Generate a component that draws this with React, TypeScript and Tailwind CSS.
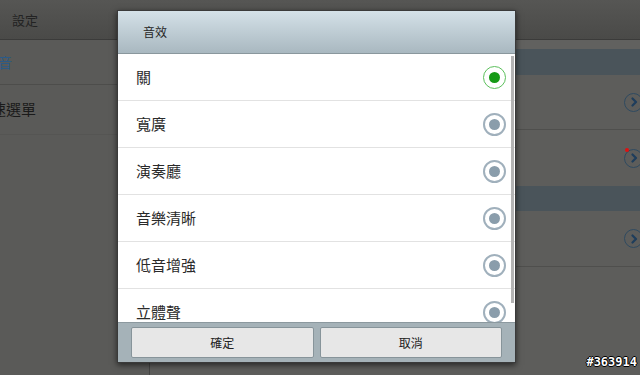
import React from "react";

const items = ["關", "寬廣", "演奏廳", "音樂清晰", "低音增強", "立體聲"];

function Radio({ on }: { on: boolean }) {
  return on ? (
    <div className="w-[23px] h-[23px] rounded-full border-[1.5px] border-[#5cc05c] flex items-center justify-center">
      <div className="w-[11px] h-[11px] rounded-full bg-[#169a16]" />
    </div>
  ) : (
    <div className="w-[23px] h-[23px] rounded-full border-2 border-[#a0b0bc] flex items-center justify-center">
      <div className="w-[11px] h-[11px] rounded-full bg-[#8a9dab]" />
    </div>
  );
}

function Chevron({ dot }: { dot?: boolean }) {
  return (
    <div className="relative w-[19px] h-[19px] mr-[-3px] rounded-full border-[1.5px] border-[#2f4a60] flex items-center justify-center">
      <svg width="10" height="10" viewBox="0 0 10 10">
        <path d="M3.5 1.5 L7 5 L3.5 8.5" fill="none" stroke="#1e3d5c" strokeWidth="2.2" strokeLinecap="round" strokeLinejoin="round" />
      </svg>
      {dot && <div className="absolute left-[0px] top-[-2px] w-[4px] h-[4px] rounded-full bg-[#e01010]" />}
    </div>
  );
}

export default function App() {
  return (
    <div
      className="relative w-[640px] h-[375px] overflow-hidden bg-[#5b5b59] flex flex-col"
      style={{ fontFamily: '"Noto Sans CJK TC", "Noto Sans", sans-serif' }}
    >
      <div className="h-[40px] shrink-0 bg-gradient-to-b from-[#565654] to-[#4a4a48] border-b border-[#3b3b3a] flex items-center pl-[12px] text-[13px] text-[#232323]">
        設定
      </div>
      <div className="flex flex-1">
        <div className="w-[150px] shrink-0 border-r border-[#444443] bg-[#5a5a58] flex flex-col">
          <div className="h-[45px] border-b border-[#4d4d4b] flex items-center overflow-hidden">
            <span className="text-[14px] text-[#2c5a86] ml-[-16px] whitespace-nowrap">聲音</span>
          </div>
          <div className="h-[50px] border-b border-[#555553] flex items-center overflow-hidden">
            <span className="text-[15px] text-[#1a1a1a] ml-[-9px] whitespace-nowrap">速選單</span>
          </div>
        </div>
        <div className="flex-1 flex flex-col">
          <div className="h-[9px] bg-[#61615f]" />
          <div className="h-[26px] bg-[#4a545a]" />
          <div className="h-[55px] bg-[#5d5d5b] border-b border-[#4f4f4d] flex items-center justify-end">
            <Chevron />
          </div>
          <div className="h-[56px] bg-[#5d5d5b] flex items-center justify-end">
            <Chevron dot />
          </div>
          <div className="h-[25px] bg-[#4a545a]" />
          <div className="h-[56px] bg-[#5d5d5b] border-b border-[#4f4f4d] flex items-center justify-end">
            <Chevron />
          </div>
          <div className="flex-1 bg-[#5d5d5b]" />
        </div>
      </div>

      <div className="absolute left-[117px] top-[10px] w-[399px] h-[353px] border border-[#3a3a3a] shadow-[0_2px_6px_rgba(0,0,0,0.6)] flex flex-col bg-white">
        <div className="h-[43px] shrink-0 bg-gradient-to-b from-[#d4e1e8] to-[#a9b8c0] border-b border-[#8a979d] flex items-center pl-[25px] text-[12px] text-[#262626]">
          音效
        </div>
        <div className="relative h-[268px] shrink-0 overflow-hidden bg-white">
          {items.map((t, i) => (
            <div
              key={t}
              className="h-[47px] border-b-[1.5px] border-[#e2e2e2] flex items-center justify-between pl-[18px] pr-[9px]"
            >
              <span className="text-[15px] text-[#2a2a2a]">{t}</span>
              <Radio on={i === 0} />
            </div>
          ))}
          <div className="absolute right-[1px] top-[2px] w-[3px] h-[247px] bg-[#b4b4b4]" />
        </div>
        <div className="flex-1 bg-[#a5b2b8] border-t border-[#8c999f] flex gap-[6px] px-[13px] pt-[4px] pb-[4px]">
          <div className="flex-1 h-[31px] bg-[#e7e7e7] border border-[#87949a] rounded-[2px] flex items-center justify-center text-[12px] text-[#222]">
            確定
          </div>
          <div className="flex-1 h-[31px] bg-[#e7e7e7] border border-[#87949a] rounded-[2px] flex items-center justify-center text-[12px] text-[#222]">
            取消
          </div>
        </div>
      </div>

      <div
        className="absolute right-[3px] bottom-[4px] text-[12px] font-bold text-white [text-shadow:1px_0_0_#000,-1px_0_0_#000,0_1px_0_#000,0_-1px_0_#000]"
        style={{ fontFamily: '"DejaVu Sans Mono", monospace' }}
      >
        #363914
      </div>
    </div>
  );
}
